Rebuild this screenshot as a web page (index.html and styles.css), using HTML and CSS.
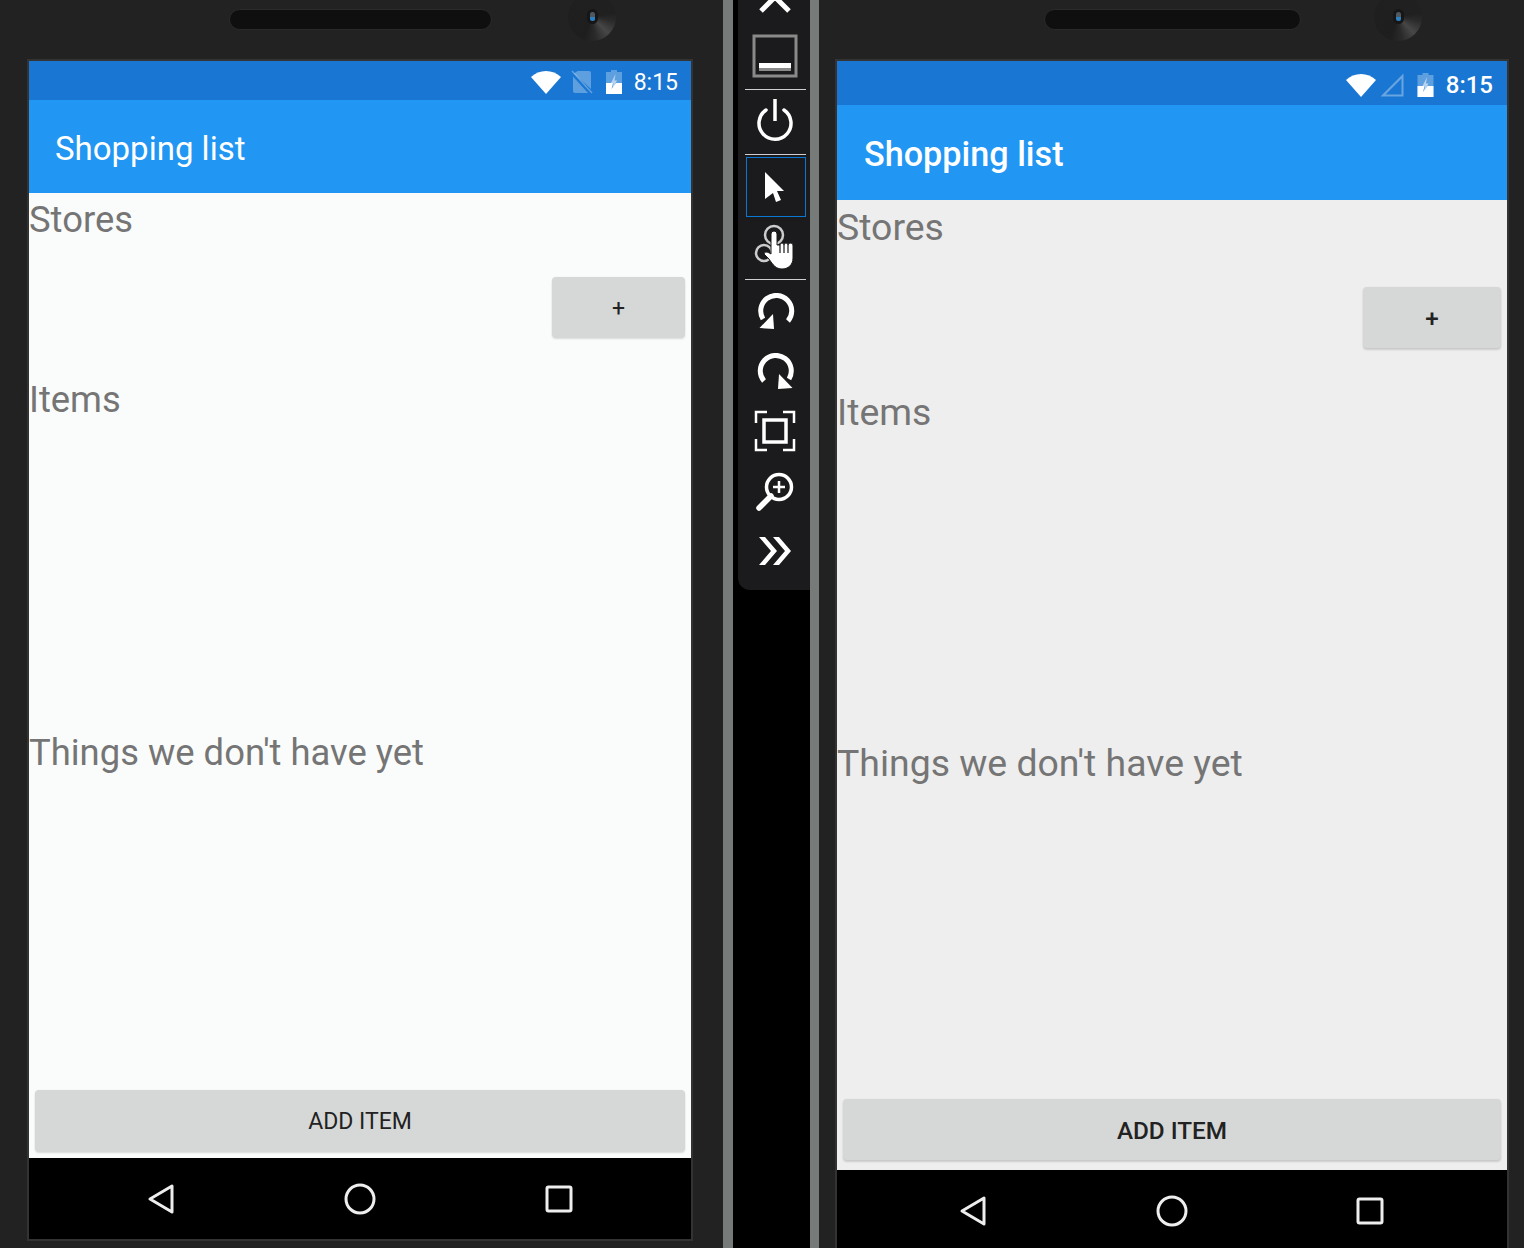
FILE: index.html
```html
<!DOCTYPE html>
<html lang="en">
<head>
  <meta charset="UTF-8">
  <title>Shopping list</title>
  <link rel="stylesheet" href="styles.css">
</head>
<body>
  <svg class="defs" width="0" height="0">
    <symbol id="wifi" viewBox="0 0 30 24"><path d="M0 7C8 -1 22 -1 30 7L15 24Z" fill="#fff"/></symbol>
    <symbol id="nosim" viewBox="0 0 22 24">
      <path d="M3 3.5 6.5 1H18a2 2 0 0 1 2 2V19ZM2 6.5V21a2 2 0 0 0 2 2H17Z" fill="#fff" opacity=".3"/>
      <path d="M1 1 21 23" stroke="#fff" stroke-width="1.6" opacity=".3"/>
    </symbol>
    <symbol id="signal" viewBox="0 0 24 24"><path d="M23.5 0.5V23.5H0.5ZM21.5 5.5 5.5 21.5H21.5Z" fill="#fff" fill-rule="evenodd" opacity=".35"/></symbol>
    <symbol id="battery" viewBox="0 0 16 24">
      <path d="M5 0H11V2H16V24H0V2H5Z" fill="#fff" opacity=".3"/>
      <path d="M0 13H7L5.5 19 10 13H16V24H0Z" fill="#fff"/>
      <path d="M9.5 4 5 13H7.5L6.5 19 11 10.5H8.5Z" fill="#fff" opacity=".55"/>
    </symbol>
    <symbol id="back" viewBox="0 0 28 32"><path d="M25 3V29L3 16Z" fill="none" stroke="#eee" stroke-width="3" stroke-linejoin="round"/></symbol>
    <symbol id="home" viewBox="0 0 32 32"><circle cx="16" cy="16" r="14" fill="none" stroke="#eee" stroke-width="3"/></symbol>
    <symbol id="recent" viewBox="0 0 28 28"><rect x="2" y="2" width="24" height="24" rx="1.5" fill="none" stroke="#eee" stroke-width="3"/></symbol>
  </svg>

  <div class="phone phone-left">
    <div class="bezel">
      <div class="speaker"></div>
      <div class="camera"><span class="lens"></span></div>
    </div>
    <div class="screen">
      <div class="statusbar">
        <svg class="ic-wifi"><use href="#wifi"/></svg>
        <svg class="ic-sim"><use href="#nosim"/></svg>
        <svg class="ic-batt"><use href="#battery"/></svg>
        <span class="time">8:15</span>
      </div>
      <div class="appbar">Shopping list</div>
      <div class="content">
        <div class="label label-stores">Stores</div>
        <button class="btn btn-plus">+</button>
        <div class="label label-items">Items</div>
        <div class="label label-things">Things we don't have yet</div>
        <button class="btn btn-add">ADD ITEM</button>
      </div>
      <div class="navbar">
        <svg class="ic-back"><use href="#back"/></svg>
        <svg class="ic-home"><use href="#home"/></svg>
        <svg class="ic-recent"><use href="#recent"/></svg>
      </div>
    </div>
  </div>

  <div class="middle">
    <div class="toolbar">
      <svg class="tool tool-close" viewBox="0 0 36 14"><path d="M4 11 18 -3 32 11" fill="none" stroke="#fff" stroke-width="5"/></svg>
      <svg class="tool tool-min" viewBox="0 0 46 44"><rect x="2" y="2" width="42" height="40" fill="none" stroke="#8a8a8a" stroke-width="3"/><rect x="7" y="29" width="32" height="8" fill="#8a8a8a"/><rect x="7" y="29" width="32" height="5" fill="#fff"/></svg>
      <hr class="sep sep-a">
      <svg class="tool tool-power" viewBox="0 0 38 42"><path d="M10 11A16 16 0 1 0 28 11" fill="none" stroke="#fff" stroke-width="3.5" stroke-linecap="round"/><path d="M19 0V22" stroke="#fff" stroke-width="3.5"/></svg>
      <hr class="sep sep-b">
      <div class="tool-active">
        <svg class="tool-arrow" viewBox="0 0 22 32"><path d="M1 1 20 20 13 20 17 29 12 31 9 22 1 28Z" fill="#fff"/></svg>
      </div>
      <svg class="tool tool-touch" viewBox="0 0 42 48">
        <circle cx="20" cy="13" r="9" fill="none" stroke="#ccc" stroke-width="2.5"/>
        <circle cx="10" cy="31" r="8" fill="none" stroke="#ccc" stroke-width="2.5"/>
        <path d="M17 12a3 3 0 0 1 6 0V23l3 0a2 2 0 0 1 4 0a2 2 0 0 1 4 0a2 2 0 0 1 5 1V36C39 43 34 47 28 47C22 47 19 43 15 37L10 32C11 29 14 30 17 32Z" fill="#fff" stroke="#1b1b1d"/>
        <path d="M26 23V31M30 23V31M34 23V31" stroke="#1b1b1d" stroke-width="1.2"/>
      </svg>
      <hr class="sep sep-c">
      <svg class="tool tool-rot" viewBox="0 0 38 38"><path d="M31 28A15.5 15.5 0 1 0 6 26" fill="none" stroke="#fff" stroke-width="5"/><path d="M2.5 35 17 36 16 21Z" fill="#fff"/></svg>
      <svg class="tool tool-rot tool-rot2" viewBox="0 0 38 38"><path d="M7 28A15.5 15.5 0 1 1 32 26" fill="none" stroke="#fff" stroke-width="5"/><path d="M35.5 35 21 36 22 21Z" fill="#fff"/></svg>
      <svg class="tool tool-fit" viewBox="0 0 42 42"><rect x="10" y="10" width="22" height="22" fill="none" stroke="#fff" stroke-width="3.5"/><path d="M13 2H2V13M29 2H40V13M13 40H2V29M29 40H40V29" fill="none" stroke="#fff" stroke-width="2.5"/></svg>
      <svg class="tool tool-zoom" viewBox="0 0 40 40"><circle cx="24" cy="15" r="12.5" fill="none" stroke="#fff" stroke-width="3.5"/><path d="M16 24 4 36" stroke="#fff" stroke-width="5.5" stroke-linecap="round"/><path d="M24 9V21M18 15H30" stroke="#fff" stroke-width="2.5"/></svg>
      <svg class="tool tool-more" viewBox="0 0 36 30"><path d="M2 1 14 15 2 29H8L20 15 8 1ZM16 1 28 15 16 29H22L34 15 22 1Z" fill="#fff"/></svg>
    </div>
  </div>

  <div class="phone phone-right">
    <div class="bezel">
      <div class="speaker"></div>
      <div class="camera"><span class="lens"></span></div>
    </div>
    <div class="screen">
      <div class="statusbar">
        <svg class="ic-wifi"><use href="#wifi"/></svg>
        <svg class="ic-sim"><use href="#signal"/></svg>
        <svg class="ic-batt"><use href="#battery"/></svg>
        <span class="time">8:15</span>
      </div>
      <div class="appbar">Shopping list</div>
      <div class="content">
        <div class="label label-stores">Stores</div>
        <button class="btn btn-plus">+</button>
        <div class="label label-items">Items</div>
        <div class="label label-things">Things we don't have yet</div>
        <button class="btn btn-add">ADD ITEM</button>
      </div>
      <div class="navbar">
        <svg class="ic-back"><use href="#back"/></svg>
        <svg class="ic-home"><use href="#home"/></svg>
        <svg class="ic-recent"><use href="#recent"/></svg>
      </div>
    </div>
  </div>
</body>
</html>
```

FILE: styles.css
```css
* { box-sizing: border-box; }
html, body { margin: 0; padding: 0; }
body { width: 1524px; height: 1248px; overflow: hidden; display: flex; background: #222222; font-family: Roboto, "Liberation Sans", sans-serif; }
.defs { position: absolute; }

/* phones */
.phone { height: 1248px; flex: none; }
.phone-left { width: 723px; padding-left: 27px; }
.phone-right { width: 705px; padding-left: 16px; }
.bezel { height: 59px; position: relative; }
.speaker { position: absolute; top: 9px; height: 21px; background: #0f0f0f; border: 1px solid #2b2b2b; border-radius: 11px; }
.phone-left .speaker { left: 202px; width: 263px; }
.phone-right .speaker { left: 209px; width: 257px; }
.camera { position: absolute; top: -7px; width: 48px; height: 48px; border-radius: 50%; background: conic-gradient(#202020 0 80deg, #2a2a2a 100deg, #474747 135deg, #2a2a2a 170deg, #1e1e1e 200deg, #202020 360deg); }
.phone-left .camera { left: 541px; }
.phone-right .camera { left: 539px; }
.lens { position: absolute; left: 22px; top: 19px; width: 5px; height: 9px; border-radius: 3px; background: linear-gradient(#4e585e 0 55%, #2a80c0 55%); box-shadow: 0 0 0 3px #161616; }

.screen { display: flex; flex-direction: column; border: 2px solid #333333; }
.phone-left .screen { width: 666px; height: 1182px; }
.phone-right .screen { width: 674px; height: 1195px; }

.statusbar { display: flex; align-items: center; justify-content: flex-end; background: #1976d2; color: #fff; flex: none; }
.phone-left .statusbar { height: 39px; padding: 2px 13px 0 0; }
.phone-right .statusbar { height: 44px; padding: 4px 14px 0 0; }
.statusbar svg { display: block; flex: none; }
.ic-wifi { width: 30px; height: 24px; }
.ic-sim { width: 22px; height: 24px; margin-left: 10px; }
.ic-batt { width: 16px; height: 24px; margin-left: 13px; }
.time { margin: 2px 0 0 12px; font-size: 23px; line-height: 28px; }
.phone-right .ic-sim { width: 24px; margin-left: 4px; }
.phone-right .ic-batt { margin-left: 13px; width: 17px; }
.phone-right .time { margin-top: 0; font-weight: 500; font-size: 24px; }

.appbar { flex: none; display: flex; align-items: center; background: #2196f3; color: #fff; }
.phone-left .appbar { height: 93px; padding: 4px 0 0 26px; font-size: 33px; }
.phone-right .appbar { height: 95px; padding: 2px 0 0 27px; font-size: 34.2px; font-weight: 500; }

.content { flex: 1; display: flex; flex-direction: column; }
.phone-left .content { background: #fafcfb; }
.phone-right .content { background: #eeeeee; }

.label { color: #757575; line-height: 44px; height: 44px; }
.phone-left .label { font-size: 36.4px; }
.phone-right .label { font-size: 37.4px; }
.phone-left .label-stores { margin-top: 5px; }
.phone-left .label-items { margin-top: 41px; }
.phone-left .label-things { margin-top: 309px; }
.phone-right .label-stores { margin-top: 5px; }
.phone-right .label-items { margin-top: 42px; }
.phone-right .label-things { margin-top: 307px; }

.btn { display: block; background: #d6d7d7; border: 0; border-radius: 4px; color: #222222; font-family: inherit; box-shadow: 0 2px 2px rgba(0, 0, 0, .14), 0 0 2px rgba(0, 0, 0, .06); padding: 2px 0 0; }
.phone-left .btn { font-size: 23px; }
.phone-right .btn { font-size: 24.3px; font-weight: 500; }
.phone-left .btn-plus { width: 133px; height: 60px; margin: 35px 6px 0 auto; }
.phone-right .btn-plus { width: 138px; height: 61px; margin: 38px 6px 0 auto; }
.btn-add { margin: auto 6px 7px; }
.phone-left .btn-add { height: 61px; width: 650px; }
.phone-right .btn-add { height: 61px; width: 658px; margin-bottom: 10px; }

.navbar { flex: none; background: #000; display: flex; align-items: center; justify-content: space-between; }
.navbar svg { display: block; }
.phone-left .navbar { height: 81px; padding: 0 118px 0 118px; }
.phone-right .navbar { height: 82px; padding: 0 123px 0 122px; }
.ic-back { width: 28px; height: 32px; }
.ic-home { width: 32px; height: 32px; }
.ic-recent { width: 28px; height: 28px; }

/* emulator toolbar */
.middle { width: 96px; flex: none; height: 1248px; background: #000; border-left: 10px solid #767a78; border-right: 9px solid #767a78; padding-left: 5px; }
.toolbar { width: 72px; height: 590px; background: #1b1b1d; border-bottom-left-radius: 12px; display: flex; flex-direction: column; align-items: center; padding-left: 3px; }
.tool { display: block; flex: none; }
.tool-close { width: 36px; height: 14px; margin-right: 2px; }
.tool-min { width: 46px; height: 44px; margin-top: 20px; margin-right: 2px; }
.sep { width: 61px; height: 1px; border: 0; margin: 0; background: #cfcfcf; flex: none; }
.sep-a { margin-top: 11px; }
.tool-power { width: 38px; height: 42px; margin-top: 9px; margin-right: 1px; }
.sep-b { margin-top: 13px; }
.tool-active { width: 60px; height: 60px; margin-top: 2px; border: 1px solid #0a77d5; display: flex; align-items: center; justify-content: center; flex: none; }
.tool-arrow { width: 22px; height: 32px; margin-right: 1px; }
.tool-touch { width: 42px; height: 48px; margin-top: 5px; margin-right: 2px; }
.sep-c { margin-top: 9px; }
.tool-rot { width: 38px; height: 38px; margin-top: 13px; }
.tool-rot2 { margin-top: 22px; }
.tool-fit { width: 42px; height: 42px; margin-top: 19px; margin-right: 1px; }
.tool-zoom { width: 40px; height: 40px; margin-top: 20px; margin-right: 2px; }
.tool-more { width: 36px; height: 30px; margin-top: 24px; margin-right: 1px; }
```
